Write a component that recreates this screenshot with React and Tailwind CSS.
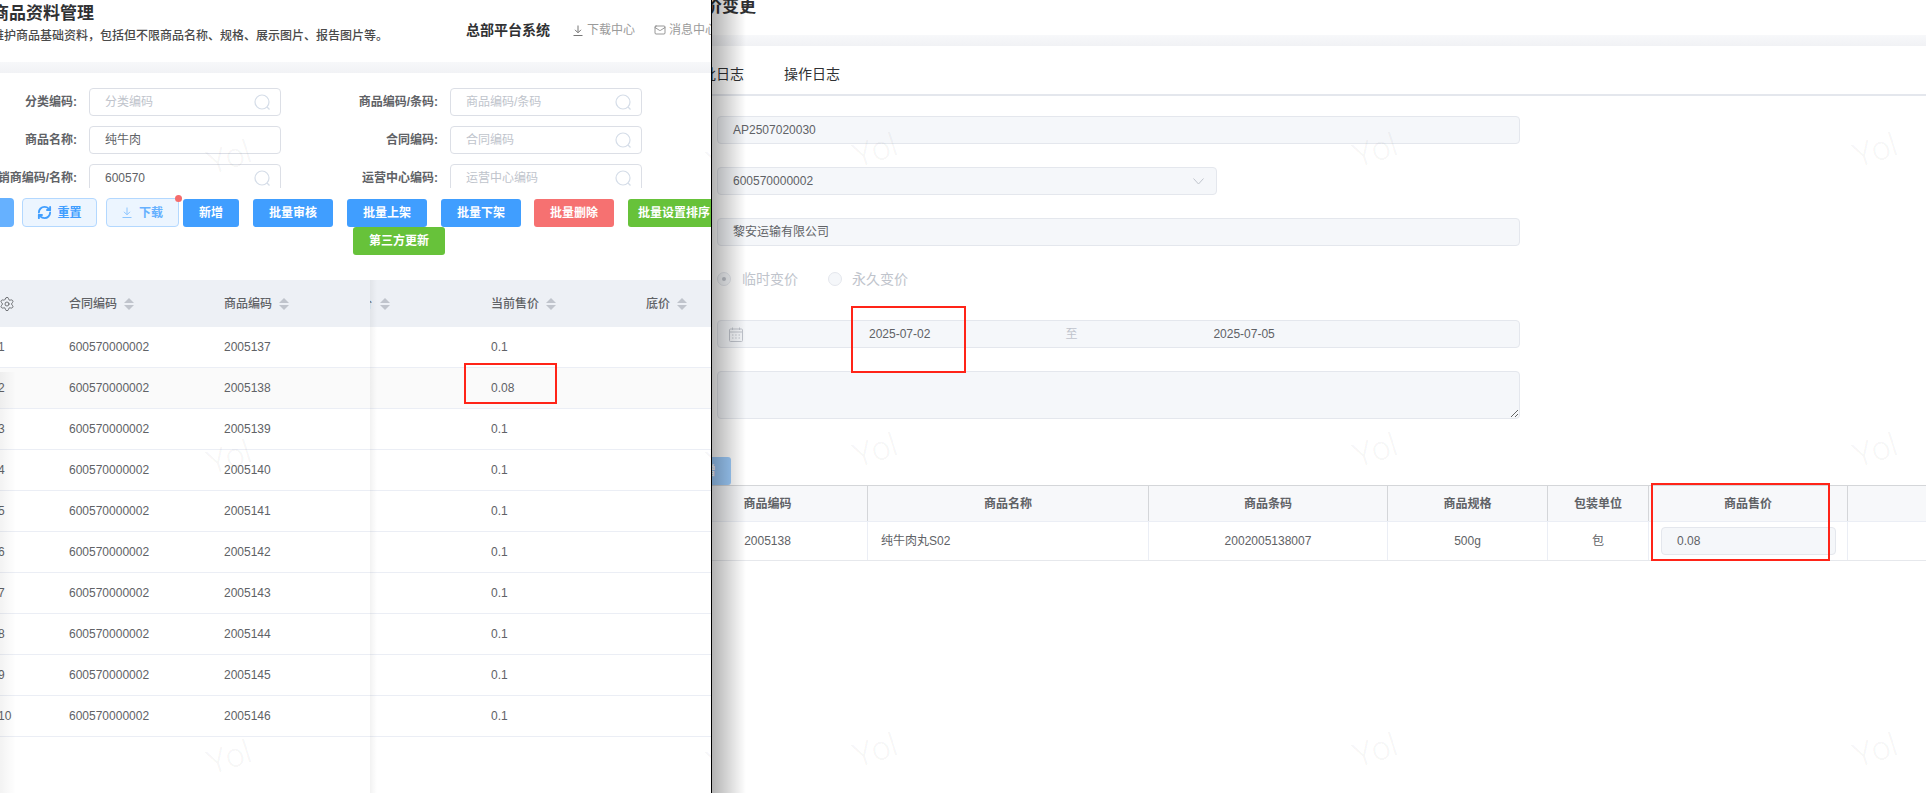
import React from "react";
import { RefreshCw, Settings, Mail } from "lucide-react";

const FONT = "[font-family:'Liberation_Sans','Noto_Sans_CJK_SC',sans-serif]";

function SearchGlyph() {
  return (
    <svg width="17" height="17" viewBox="0 0 17 17" fill="none" stroke="#d5dde8" strokeWidth="1.2" className="shrink-0">
      <circle cx="8" cy="8" r="7" />
      <path d="M13 13l2.5 2.5" />
    </svg>
  );
}

function DownGlyph({ color, size = 10 }) {
  return (
    <svg width={size} height={size + 1} viewBox="0 0 10 11" fill="none" stroke={color} strokeWidth="1" className="shrink-0">
      <path d="M5 0.5v7M2 4.8l3 3 3-3M0.5 10.5h9" />
    </svg>
  );
}

function SortGlyph() {
  return (
    <svg width="10" height="12" viewBox="0 0 10 12" fill="#c0c4cc" className="shrink-0">
      <path d="M5 0l5 5H0z" />
      <path d="M5 12l5-5H0z" />
    </svg>
  );
}

function FilterInput({ value, placeholder, icon = true }) {
  return (
    <div className="w-[192px] h-[28px] shrink-0 border border-[#dcdfe6] rounded-[4px] flex items-center pl-[15px] pr-[9px] bg-white">
      <input
        readOnly
        value={value || ""}
        placeholder={placeholder}
        className="flex-1 min-w-0 bg-transparent outline-none text-[12px] text-[#606266] placeholder:text-[#c0c4cc]"
      />
      {icon && <SearchGlyph />}
    </div>
  );
}

function FilterRow({ a, b }) {
  return (
    <div className="flex items-center h-[28px]">
      <div className="w-[77px] shrink-0 flex justify-end whitespace-nowrap text-[12px] font-semibold text-[#606266]">{a.label}</div>
      <div className="ml-[12px]"><FilterInput {...a} /></div>
      <div className="w-[157px] shrink-0 flex justify-end whitespace-nowrap text-[12px] font-semibold text-[#606266]">{b.label}</div>
      <div className="ml-[12px]"><FilterInput {...b} /></div>
    </div>
  );
}

function ActionBtn({ children, className }) {
  return (
    <button className={`h-[28px] shrink-0 rounded-[3px] text-white text-[12px] font-semibold whitespace-nowrap overflow-hidden ${className}`}>
      {children}
    </button>
  );
}

function HeadCell({ label, className }) {
  return (
    <div className={`flex items-center gap-[7px] shrink-0 ${className}`}>
      <span className="text-[12px] font-medium text-[#606266]">{label}</span>
      <SortGlyph />
    </div>
  );
}

const rows = [
  ["1", "2005137", "0.1"],
  ["2", "2005138", "0.08"],
  ["3", "2005139", "0.1"],
  ["4", "2005140", "0.1"],
  ["5", "2005141", "0.1"],
  ["6", "2005142", "0.1"],
  ["7", "2005143", "0.1"],
  ["8", "2005144", "0.1"],
  ["9", "2005145", "0.1"],
  ["10", "2005146", "0.1"],
];

function Watermark({ x, y }) {
  return (
    <div
      className="absolute pointer-events-none -translate-x-1/2 -translate-y-1/2 -rotate-[18deg] text-[33px] leading-none font-light text-black/[0.05] [font-family:Roboto,sans-serif]"
      style={{ left: x, top: y }}
    >
      Yol
    </div>
  );
}

const inputCls = "h-[28px] border border-[#e4e7ed] bg-[#f5f7fa] rounded-[4px] flex items-center text-[12px] text-[#606266]";

function LeftPanel() {
  return (
    <div className="relative w-[712px] h-full shrink-0 overflow-hidden border-r border-black bg-white">
      {/* page header */}
      <div className="flex h-[62px]">
        <div className="-ml-[8px] w-[474px] shrink-0 pt-[3px]">
          <div className="text-[17px] leading-[22px] font-semibold text-[#303133] whitespace-nowrap">商品资料管理</div>
          <div className="mt-[3px] text-[12px] leading-[16px] font-medium text-[#4a4a4a] whitespace-nowrap">维护商品基础资料，包括但不限商品名称、规格、展示图片、报告图片等。</div>
        </div>
        <div className="flex items-center h-[60px] text-[12px] text-[#9a9a9a] whitespace-nowrap">
          <span className="w-[107px] shrink-0 text-[14px] font-bold text-[#303133]">总部平台系统</span>
          <DownGlyph color="#777" />
          <span className="ml-[4px]">下载中心</span>
          <Mail size={12} strokeWidth={1.5} color="#777" className="ml-[19px] shrink-0" />
          <span className="ml-[3px]">消息中心</span>
        </div>
      </div>
      <div className="h-[11px] bg-linear-to-b from-[#f7f8fa] to-[#f1f2f5]" />

      {/* filters */}
      <div className="mt-[15px] h-[100px] overflow-hidden flex flex-col gap-[10px]">
        <FilterRow a={{ label: "分类编码:", placeholder: "分类编码" }} b={{ label: "商品编码/条码:", placeholder: "商品编码/条码" }} />
        <FilterRow a={{ label: "商品名称:", value: "纯牛肉", icon: false }} b={{ label: "合同编码:", placeholder: "合同编码" }} />
        <FilterRow a={{ label: "经销商编码/名称:", value: "600570" }} b={{ label: "运营中心编码:", placeholder: "运营中心编码" }} />
      </div>

      {/* actions */}
      <div className="mt-[10px] flex items-end h-[29px]">
        <button className="-ml-[60px] w-[74px] h-[29px] shrink-0 rounded-[4px] bg-[#66b1ff] text-white text-[12px]">查询</button>
        <button className="ml-[8px] w-[75px] h-[29px] shrink-0 rounded-[4px] border border-[#b3d8ff] bg-[#ecf5ff] text-[#409eff] text-[12px] font-semibold flex items-center justify-center gap-[5px]">
          <RefreshCw size={15} strokeWidth={3} />
          <span>重置</span>
        </button>
        <button className="relative ml-[9px] w-[73px] h-[29px] shrink-0 rounded-[4px] border border-[#b3d8ff] bg-[#ecf5ff] text-[#66b1ff] text-[12px] font-semibold flex items-center justify-center gap-[7px]">
          <DownGlyph color="#8cc5ff" />
          <span>下载</span>
          <span className="absolute -right-[4px] -top-[4px] w-[7px] h-[7px] rounded-full bg-[#f56c6c]" />
        </button>
        <ActionBtn className="ml-[4px] w-[56px] bg-[#409eff]">新增</ActionBtn>
        <ActionBtn className="ml-[14px] w-[80px] bg-[#409eff]">批量审核</ActionBtn>
        <ActionBtn className="ml-[14px] w-[80px] bg-[#409eff]">批量上架</ActionBtn>
        <ActionBtn className="ml-[14px] w-[80px] bg-[#409eff]">批量下架</ActionBtn>
        <ActionBtn className="ml-[13px] w-[80px] bg-[#f67171]">批量删除</ActionBtn>
        <ActionBtn className="ml-[14px] w-[92px] bg-[#67c23a]">批量设置排序</ActionBtn>
      </div>
      <div className="flex">
        <ActionBtn className="ml-[353px] w-[92px] bg-[#67c23a]">第三方更新</ActionBtn>
      </div>

      {/* table */}
      <div className="mt-[25px]">
        <div className="flex items-center h-[47px] bg-[#edf0f5]">
          <div className="-ml-[1px] w-[70px] shrink-0">
            <Settings size={16} strokeWidth={1.3} color="#606266" />
          </div>
          <HeadCell label="合同编码" className="w-[155px]" />
          <HeadCell label="商品编码" className="w-[146px]" />
          <div className="w-[2px] shrink-0 overflow-hidden flex justify-end text-[12px] font-medium text-[#606266]">
            <span className="shrink-0">价</span>
          </div>
          <div className="ml-[8px] w-[111px] shrink-0"><SortGlyph /></div>
          <HeadCell label="当前售价" className="w-[155px]" />
          <HeadCell label="底价" className="w-[65px]" />
        </div>
        {rows.map(([n, code, price]) => (
          <div
            key={n}
            className={`flex items-center h-[41px] border-b border-[#ebeef5] text-[12px] text-[#606266] ${n === "2" ? "bg-[#fafafa]" : "bg-white"}`}
          >
            <div className="-ml-[2px] w-[71px] shrink-0">{n}</div>
            <div className="w-[155px] shrink-0">600570000002</div>
            <div className="w-[146px] shrink-0">{code}</div>
            <div className="w-[121px] shrink-0" />
            <div>{price}</div>
          </div>
        ))}
      </div>

      {/* fixed-column shadows */}
      <div className="absolute left-[370px] top-[280px] bottom-0 w-[7px] bg-linear-to-r from-black/[0.05] to-transparent pointer-events-none" />
      <div className="absolute left-0 top-[372px] bottom-0 w-[16px] bg-linear-to-r from-black/[0.05] to-transparent pointer-events-none" />

      {[157, 457, 757].map((y) => (
        <React.Fragment key={y}>
          <Watermark x={229} y={y} />
          <Watermark x={729} y={y} />
        </React.Fragment>
      ))}
    </div>
  );
}

function RightPanel() {
  const cols = "grid grid-cols-[200px_281px_239px_160px_101px_199px_78px]";
  const head = "flex items-center justify-center border-r border-[#d4d6d9] text-[12px] font-semibold text-[#606266]";
  const cell = "flex items-center justify-center border-r border-[#ebeef5] text-[12px] text-[#606266]";
  return (
    <div className="relative flex-1 min-w-0 h-full overflow-hidden bg-white">
      <div className="h-[35px] flex items-start">
        <div className="-mt-[4px] -ml-[7px] text-[17px] leading-[22px] font-semibold text-[#303133] whitespace-nowrap">价变更</div>
      </div>
      <div className="h-[11px] bg-linear-to-b from-[#f7f8fa] to-[#f1f2f5]" />
      <div className="h-[50px] pt-[9px] border-b-2 border-[#e4e7ed] flex items-center -ml-[24px] gap-[40px] text-[14px] text-[#303133]">
        <span>审批日志</span>
        <span>操作日志</span>
      </div>

      <div className="pl-[5px]">
        <div className={`mt-[20px] w-[803px] pl-[15px] ${inputCls}`}>AP2507020030</div>
        <div className={`mt-[23px] w-[500px] pl-[15px] pr-[12px] justify-between ${inputCls}`}>
          <span>600570000002</span>
          <svg width="11" height="7" viewBox="0 0 11 7" fill="none" stroke="#c0c4cc" strokeWidth="1"><path d="M0.5 0.5l5 5.5 5-5.5" /></svg>
        </div>
        <div className={`mt-[23px] w-[803px] pl-[15px] ${inputCls}`}>黎安运输有限公司</div>

        <div className="mt-[23px] h-[20px] flex items-center text-[14px] text-[#c0c4cc]">
          <span className="w-[14px] h-[14px] rounded-full border border-[#e4e7ed] bg-[#f5f7fa] flex items-center justify-center">
            <span className="w-[4px] h-[4px] rounded-full bg-[#c0c4cc]" />
          </span>
          <span className="ml-[11px]">临时变价</span>
          <span className="ml-[30px] w-[14px] h-[14px] rounded-full border border-[#e4e7ed] bg-[#f5f7fa]" />
          <span className="ml-[10px]">永久变价</span>
        </div>

        <div className={`mt-[31px] w-[803px] pl-[11px] ${inputCls}`}>
          <svg width="14" height="15" viewBox="0 0 14 15" fill="none" stroke="#c0c4cc" strokeWidth="1" className="shrink-0">
            <rect x="0.5" y="2" width="13" height="12.5" rx="1" />
            <path d="M0.5 5h13M3.5 0.5v2.5M10.5 0.5v2.5M3 8h1.5M6.2 8h1.5M9.5 8h1.5M3 11h1.5M6.2 11h1.5M9.5 11h1.5" />
          </svg>
          <span className="ml-[126px]">2025-07-02</span>
          <span className="ml-[135px] text-[#c0c4cc]">至</span>
          <span className="ml-[136px]">2025-07-05</span>
        </div>

        <textarea readOnly className="block mt-[23px] w-[803px] h-[48px] border border-[#e4e7ed] bg-[#f5f7fa] rounded-[4px] outline-none" />
      </div>

      <button className="block mt-[38px] -ml-[36px] w-[55px] h-[28px] rounded-[3px] bg-[#a0cfff] text-white text-[12px] font-semibold">新增</button>

      {/* detail table */}
      <div className="-ml-[44px]">
        <div className={`${cols} h-[37px] border-t border-b border-t-[#d4d6d9] border-b-[#ebeef5] bg-[#f7f8fa]`}>
          {["商品编码", "商品名称", "商品条码", "商品规格", "包装单位", "商品售价", ""].map((t, i) => (
            <div key={i} className={i === 6 ? "flex items-center justify-center text-[12px]" : head}>{t}</div>
          ))}
        </div>
        <div className={`${cols} h-[39px] border-b border-[#e6e8ec]`}>
          <div className={cell}>2005138</div>
          <div className={`${cell} justify-start! pl-[13px]`}>纯牛肉丸S02</div>
          <div className={cell}>2002005138007</div>
          <div className={cell}>500g</div>
          <div className={cell}>包</div>
          <div className="flex items-center pl-[12px] border-r border-[#ebeef5]">
            <div className={`w-[175px] pl-[15px] ${inputCls}`}>0.08</div>
          </div>
          <div />
        </div>
      </div>

      {[150, 450, 750].map((y) => (
        <React.Fragment key={y}>
          <Watermark x={163} y={y} />
          <Watermark x={663} y={y} />
          <Watermark x={1163} y={y} />
        </React.Fragment>
      ))}

      {/* drawer shadow */}
      <div className="absolute left-0 top-0 bottom-0 w-[34px] bg-linear-to-r from-black/30 to-transparent pointer-events-none" />
    </div>
  );
}

export default function App() {
  return (
    <div className={`relative flex w-[1926px] h-[793px] overflow-hidden bg-white ${FONT}`}>
      <LeftPanel />
      <RightPanel />
      {/* red annotation boxes */}
      <div className="absolute left-[464px] top-[363px] w-[93px] h-[41px] border-2 border-[#ff2418] pointer-events-none" />
      <div className="absolute left-[851px] top-[306px] w-[115px] h-[67px] border-2 border-[#ff2418] pointer-events-none" />
      <div className="absolute left-[1651px] top-[483px] w-[179px] h-[78px] border-2 border-[#ff2418] pointer-events-none" />
    </div>
  );
}
